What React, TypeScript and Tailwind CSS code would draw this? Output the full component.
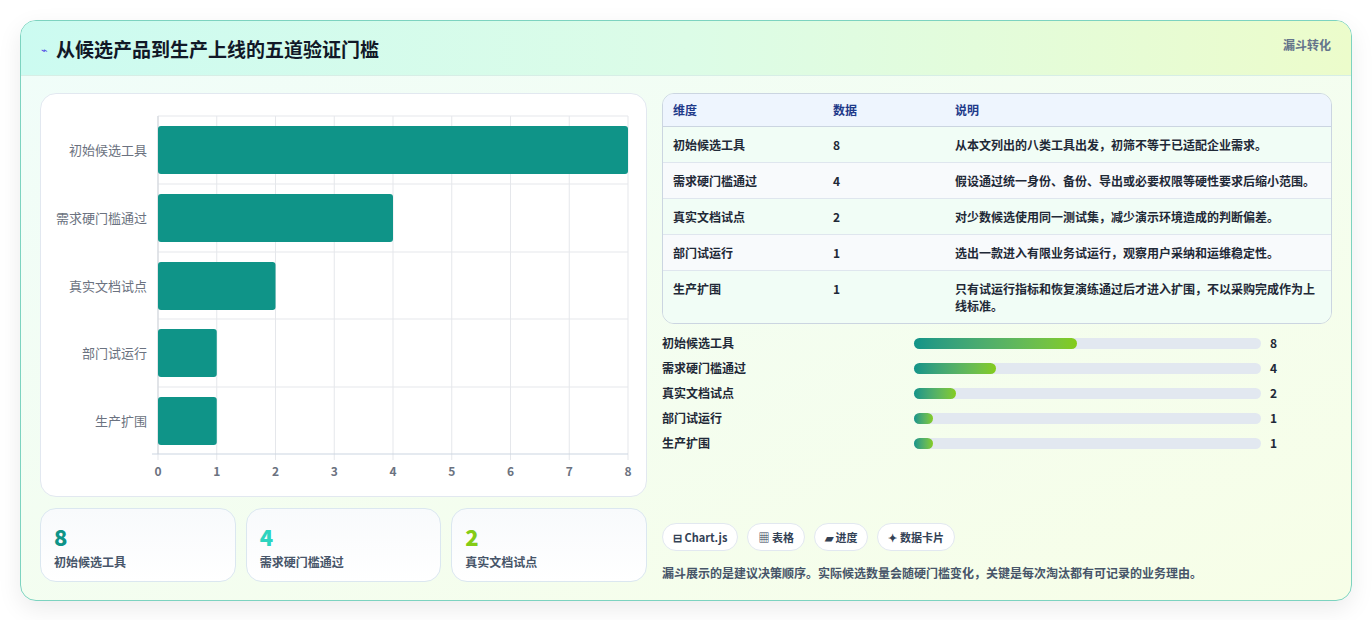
import { Fragment } from 'react';

const rows = [
    { name: '初始候选工具', value: 8, note: '从本文列出的八类工具出发，初筛不等于已适配企业需求。' },
    { name: '需求硬门槛通过', value: 4, note: '假设通过统一身份、备份、导出或必要权限等硬性要求后缩小范围。' },
    { name: '真实文档试点', value: 2, note: '对少数候选使用同一测试集，减少演示环境造成的判断偏差。' },
    { name: '部门试运行', value: 1, note: '选出一款进入有限业务试运行，观察用户采纳和运维稳定性。' },
    { name: '生产扩围', value: 1, note: '只有试运行指标和恢复演练通过后才进入扩围，不以采购完成作为上线标准。' },
];

const font = { fontFamily: '"Noto Sans CJK SC", "Liberation Sans", sans-serif' };

function Chart() {
    const left = 117;
    const right = 587;
    const step = (right - left) / 8;
    return (
        <svg width="606" height="401" className="block">
            {Array.from({ length: 9 }).map((_, i) => (
                <line key={i} x1={left + i * step} x2={left + i * step} y1={22} y2={366} stroke="#e5e7eb" />
            ))}
            {[22, 90, 158, 225, 293].map((y) => (
                <line key={y} x1={left} x2={right} y1={y} y2={y} stroke="#e5e7eb" />
            ))}
            <line x1={left} x2={left} y1={22} y2={360} stroke="#d1d5db" />
            <line x1={left - 6} x2={right} y1={360} y2={360} stroke="#cbd5e1" />
            {rows.map((r, i) => {
                const y = [32, 100, 168, 235, 303][i];
                return (
                    <g key={r.name}>
                        <rect x={left} y={y} width={r.value * step} height={48} rx={3} fill="#0f9488" />
                        <text x={106} y={y + 29} textAnchor="end" fontSize="13" fill="#6b7280" style={font}>
                            {r.name}
                        </text>
                    </g>
                );
            })}
            {Array.from({ length: 9 }).map((_, i) => (
                <text key={i} x={left + i * step} y={382} textAnchor="middle" fontSize="12" fontWeight="600" fill="#6b7280" style={font}>
                    {i}
                </text>
            ))}
        </svg>
    );
}

export default function App() {
    const stats = [
        { v: 8, c: 'text-[#0f9488]', l: '初始候选工具' },
        { v: 4, c: 'text-[#2dd4bf]', l: '需求硬门槛通过' },
        { v: 2, c: 'text-[#84cc16]', l: '真实文档试点' },
    ];
    return (
        <div className="min-h-[620px] bg-white px-5 pt-5" style={font}>
            <div className="w-[1332px] overflow-hidden rounded-2xl border border-[#7dd3c0] bg-gradient-to-br from-[#f0fdfa] to-[#f7fee7] shadow-[0_8px_24px_rgba(0,0,0,0.08)]">
                <div className="flex h-[55px] items-start justify-between border-b border-[#d7eee6] bg-gradient-to-r from-[#ccfbf1] via-[#dcfce7] to-[#ecfccb] px-5">
                    <div className="flex items-center gap-2 pt-[14px]">
                        <span className="text-[11px] text-[#4f46e5]">⌁</span>
                        <h1 className="text-[19px] font-bold text-[#111827]">从候选产品到生产上线的五道验证门槛</h1>
                    </div>
                    <span className="pt-[15px] text-[12px] font-semibold text-[#64748b]">漏斗转化</span>
                </div>
                <div className="flex gap-[15px] px-[19px] pb-[18px] pt-[17px]">
                    <div className="flex w-[607px] flex-col gap-[11px]">
                        <div className="h-[404px] rounded-2xl border border-[#e2e8f0] bg-white">
                            <Chart />
                        </div>
                        <div className="grid grid-cols-3 gap-[10px]">
                            {stats.map((s) => (
                                <div key={s.l} className="h-[74px] rounded-2xl border border-[#dbe7f0] bg-gradient-to-b from-[#f8fafc] to-white px-[13px] pt-[13px]">
                                    <div className={`text-[22px] font-extrabold leading-[28px] ${s.c}`}>{s.v}</div>
                                    <div className="mt-[3px] text-[12px] font-semibold text-[#475569]">{s.l}</div>
                                </div>
                            ))}
                        </div>
                    </div>
                    <div className="flex w-[671px] flex-col">
                        <div className="overflow-hidden rounded-xl border border-[#cbd5e1] text-[12px]">
                            <div className="grid h-[33px] grid-cols-[160px_122px_1fr] items-center border-b border-[#cbd5e1] bg-[#eef5fe] px-[10px] font-semibold text-[#1e3a8a]">
                                <span>维度</span>
                                <span>数据</span>
                                <span>说明</span>
                            </div>
                            {rows.map((r, i) => (
                                <div
                                    key={r.name}
                                    className={`grid grid-cols-[160px_122px_1fr] items-start px-[10px] py-[9px] font-semibold leading-[17px] text-[#1f2937] ${i < 4 ? 'border-b border-[#dfe6ee]' : ''} ${i % 2 === 1 ? 'bg-[#f8fafc]' : 'bg-[#f1fdf6]'}`}
                                >
                                    <span>{r.name}</span>
                                    <span>{r.value}</span>
                                    <span>{r.note}</span>
                                </div>
                            ))}
                        </div>
                        <div className="mt-[12px] grid grid-cols-[252px_347px_1fr] items-center gap-y-[11px] text-[12px] font-semibold text-[#1f2937]">
                            {rows.map((r) => (
                                <Fragment key={r.name}>
                                    <span className="leading-[14px]">{r.name}</span>
                                    <div className="h-[11px] rounded-full bg-[#e2e8f0]">
                                        <div
                                            className="h-full rounded-full bg-gradient-to-r from-[#0f9488] to-[#84cc16]"
                                            style={{ width: `${[0, 5.5, 12, 0, 23.5, 0, 0, 0, 47][r.value]}%` }}
                                        />
                                    </div>
                                    <span className="pl-[9px] leading-[14px]">{r.value}</span>
                                </Fragment>
                            ))}
                        </div>
                        <div className="mt-auto flex gap-[9px]">
                            {['⊟ Chart.js', '▦ 表格', '▰ 进度', '✦ 数据卡片'].map((t) => (
                                <span key={t} className="flex h-[28px] items-center rounded-full border border-[#e2e8f0] bg-white px-[10px] text-[11px] font-semibold text-[#334155]">
                                    {t}
                                </span>
                            ))}
                        </div>
                        <p className="mt-[13px] text-[12px] font-semibold text-[#475569]">
                            漏斗展示的是建议决策顺序。实际候选数量会随硬门槛变化，关键是每次淘汰都有可记录的业务理由。
                        </p>
                    </div>
                </div>
            </div>
        </div>
    );
}
